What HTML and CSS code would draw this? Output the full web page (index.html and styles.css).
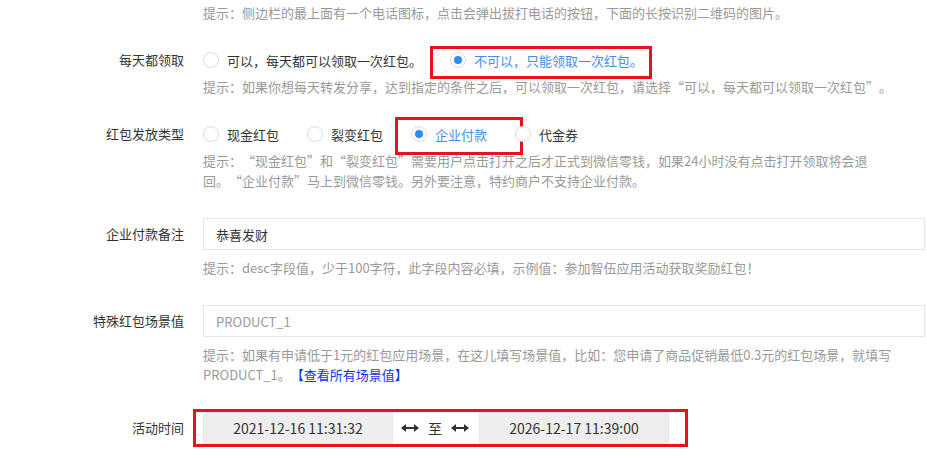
FILE: index.html
```html
<!DOCTYPE html>
<html lang="zh-CN">
<head>
    <meta charset="UTF-8">
    <meta name="viewport" content="width=device-width, initial-scale=1.0">
    <title>红包设置</title>
    <link rel="stylesheet" href="styles.css">
</head>
<body>
    <form class="form">
        <div class="form-row tip-row">
            <div class="help">提示：侧边栏的最上面有一个电话图标，点击会弹出拔打电话的按钮，下面的长按识别二维码的图片。</div>
        </div>

        <div class="form-row">
            <label class="form-label">每天都领取</label>
            <div class="form-field">
                <div class="radio-group">
                    <label class="radio"><span class="radio-icon"></span>可以，每天都可以领取一次红包。</label>
                    <label class="radio checked"><span class="radio-icon"></span>不可以，只能领取一次红包。<span class="mark mark-daily"></span></label>
                </div>
                <div class="help">提示：如果你想每天转发分享，达到指定的条件之后，可以领取一次红包，请选择<span class="q">“可以，每天都可以领取一次红包”</span>。</div>
            </div>
        </div>

        <div class="form-row">
            <label class="form-label">红包发放类型</label>
            <div class="form-field">
                <div class="radio-group">
                    <label class="radio"><span class="radio-icon"></span>现金红包</label>
                    <label class="radio"><span class="radio-icon"></span>裂变红包</label>
                    <label class="radio checked"><span class="radio-icon"></span>企业付款<span class="mark mark-type"></span></label>
                    <label class="radio"><span class="radio-icon"></span>代金券</label>
                </div>
                <div class="help">提示：<span class="q">“现金红包”</span>和<span class="q">“裂变红包”</span>需要用户点击打开之后才正式到微信零钱，如果24小时没有点击打开领取将会退<br>回。<span class="q">“企业付款”</span>马上到微信零钱。另外要注意，特约商户不支持企业付款。</div>
            </div>
        </div>

        <div class="form-row input-row">
            <label class="form-label">企业付款备注</label>
            <div class="form-field">
                <input class="text-input" type="text" value="恭喜发财">
                <div class="help">提示：desc字段值，少于100字符，此字段内容必填，示例值：参加智伍应用活动获取奖励红包！</div>
            </div>
        </div>

        <div class="form-row input-row">
            <label class="form-label">特殊红包场景值</label>
            <div class="form-field">
                <input class="text-input" type="text" placeholder="PRODUCT_1">
                <div class="help">提示：如果有申请低于1元的红包应用场景，在这儿填写场景值，比如：您申请了商品促销最低0.3元的红包场景，就填写<br>PRODUCT_1。<a class="help-link" href="#">【查看所有场景值】</a></div>
            </div>
        </div>

        <div class="form-row input-row">
            <label class="form-label">活动时间</label>
            <div class="form-field">
                <div class="date-range">
                    <span class="date-input">2021-12-16 11:31:32</span>
                    <span class="date-sep">
                        <svg class="arrow" width="18" height="8" viewBox="0 0 18 8"><path d="M0 4L5 0V3H13V0L18 4L13 8V5H5V8Z" fill="#333"/></svg>
                        至
                        <svg class="arrow" width="18" height="8" viewBox="0 0 18 8"><path d="M0 4L5 0V3H13V0L18 4L13 8V5H5V8Z" fill="#333"/></svg>
                    </span>
                    <span class="date-input">2026-12-17 11:39:00</span>
                    <span class="mark mark-date"></span>
                </div>
            </div>
        </div>
    </form>
</body>
</html>
```

FILE: styles.css
```css
body {
    margin: 0;
    background-color: #fff;
    font-family: "Noto Sans CJK SC", "Microsoft YaHei", sans-serif;
    font-size: 13px;
    color: #333;
    text-spacing-trim: space-all;
}

.form {
    padding: 3px 2px 0 0;
}

.form-row {
    display: flex;
    margin-bottom: 21px;
}

.tip-row {
    padding-left: 203px;
}

.input-row {
    padding-top: 6px;
}

.form-label {
    flex: 0 0 184px;
    text-align: right;
    line-height: 32px;
    color: #333;
}

.form-field {
    flex: 1;
    margin-left: 19px;
}

.help {
    line-height: 20px;
    color: #999;
}

.help .q {
    font-feature-settings: "fwid";
}

.form-field .help {
    margin-top: 1px;
}

.input-row .help {
    margin-top: 8px;
}

.help-link {
    color: #1034e0;
    text-decoration: none;
}

/* radios */
.radio-group {
    display: flex;
    align-items: center;
    height: 32px;
}

.radio {
    position: relative;
    display: inline-flex;
    align-items: center;
    margin-right: 28px;
    cursor: pointer;
}

.radio-icon {
    position: relative;
    width: 16px;
    height: 16px;
    margin-right: 8px;
    border: 1px solid #dcdcdc;
    border-radius: 50%;
    box-sizing: border-box;
    background-color: #fff;
}

.radio.checked {
    color: #3d8fee;
}

.radio.checked .radio-icon::after {
    content: "";
    position: absolute;
    top: 3px;
    left: 3px;
    width: 8px;
    height: 8px;
    border-radius: 50%;
    background-color: #2f8cf5;
}

/* red annotation boxes */
.mark {
    position: absolute;
    border: 3px solid #e8111c;
    box-sizing: border-box;
    pointer-events: none;
}

.mark-daily {
    left: -20px;
    top: -5px;
    width: 222px;
    height: 33px;
}

.mark-type {
    left: -16px;
    top: -8px;
    width: 128px;
    height: 38px;
}

.mark-date {
    left: -10px;
    right: -19px;
    top: -3px;
    bottom: -3px;
}

/* text inputs */
.text-input {
    display: block;
    width: 100%;
    height: 32px;
    padding: 0 12px;
    border: 1px solid #e6e6e6;
    box-sizing: border-box;
    font-family: inherit;
    font-size: 13px;
    color: #333;
    outline: none;
}

.text-input::placeholder {
    color: #999;
}

/* date range */
.date-range {
    position: relative;
    display: inline-flex;
    height: 32px;
}

.date-input {
    width: 190px;
    line-height: 30px;
    border: 1px solid #e6e6e6;
    background-color: #eee;
    box-sizing: border-box;
    text-align: center;
    font-size: 14px;
    color: #333;
}

.date-sep {
    display: flex;
    align-items: center;
    justify-content: center;
    gap: 9px;
    width: 86px;
    padding-right: 2px;
    box-sizing: border-box;
    font-size: 14px;
}
```
